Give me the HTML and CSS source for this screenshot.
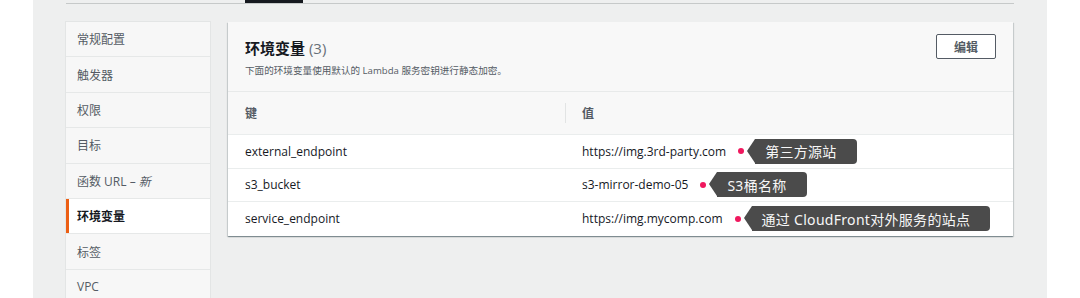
FILE: index.html
```html
<!DOCTYPE html>
<html lang="zh-CN">
<head>
    <meta charset="UTF-8">
    <title>环境变量</title>
    <link rel="stylesheet" href="styles.css">
</head>
<body>
    <div class="page">
        <div class="tabs">
            <div class="tab-active"></div>
        </div>
        <div class="layout">
            <div class="side-nav">
                <a href="#" class="nav-item">常规配置</a>
                <a href="#" class="nav-item">触发器</a>
                <a href="#" class="nav-item">权限</a>
                <a href="#" class="nav-item">目标</a>
                <a href="#" class="nav-item">函数 URL – <i>新</i></a>
                <a href="#" class="nav-item active">环境变量</a>
                <a href="#" class="nav-item">标签</a>
                <a href="#" class="nav-item">VPC</a>
            </div>
            <div class="panel">
                <div class="panel-header">
                    <div class="panel-title">
                        <h2>环境变量 <span class="count">(3)</span></h2>
                        <p>下面的环境变量使用默认的 Lambda 服务密钥进行静态加密。</p>
                    </div>
                    <button class="edit-button">编辑</button>
                </div>
                <div class="table">
                    <div class="row head">
                        <div class="cell">键</div>
                        <div class="cell divided">值</div>
                    </div>
                    <div class="row">
                        <div class="cell">external_endpoint</div>
                        <div class="cell">https://img.3rd-party.com<span class="dot"></span><span class="note">第三方源站</span></div>
                    </div>
                    <div class="row">
                        <div class="cell">s3_bucket</div>
                        <div class="cell">s3-mirror-demo-05<span class="dot"></span><span class="note">S3桶名称</span></div>
                    </div>
                    <div class="row">
                        <div class="cell">service_endpoint</div>
                        <div class="cell">https://img.mycomp.com<span class="dot"></span><span class="note">通过 CloudFront对外服务的站点</span></div>
                    </div>
                </div>
            </div>
        </div>
    </div>
</body>
</html>
```

FILE: styles.css
```css
body {
    margin: 0;
    background-color: #fff;
    font-family: 'Open Sans', 'Noto Sans CJK SC', sans-serif;
    color: #16191f;
}

.page {
    margin-left: 33px;
    width: 948px;
    height: 298px;
    padding: 0 33px;
    background-color: #eeefef;
    overflow: hidden;
}

.tabs {
    height: 3px;
    border-bottom: 1px solid #c6c9c9;
}

.tab-active {
    margin-left: 179px;
    width: 58px;
    height: 3px;
    background-color: #16191f;
}

.layout {
    display: grid;
    grid-template-columns: 144px 785px;
    gap: 18px;
    margin-top: 18px;
    align-items: start;
}

/* left navigation */
.side-nav {
    display: flex;
    flex-direction: column;
    background-color: #f7f7f7;
    box-shadow: 0 0 0 1px #e3e5e5;
}

.nav-item {
    display: flex;
    align-items: center;
    box-sizing: border-box;
    height: 35.4px;
    padding-left: 11px;
    border-bottom: 1px solid #e6e8e8;
    font-size: 12px;
    color: #545b64;
    text-decoration: none;
}

.nav-item i {
    margin-left: 3px;
}

.nav-item.active {
    background-color: #fff;
    color: #16191f;
    font-weight: 700;
    box-shadow: inset 3px 0 0 #ec5f14;
}

/* panel */
.panel {
    background-color: #fff;
    box-shadow: 0 1px 1px 0 rgba(0, 28, 36, 0.3), 1px 1px 1px 0 rgba(0, 28, 36, 0.12), -1px 1px 1px 0 rgba(0, 28, 36, 0.12);
}

.panel-header {
    display: flex;
    justify-content: space-between;
    align-items: flex-start;
    box-sizing: border-box;
    height: 70px;
    padding: 12px 17px 0 17px;
    background-color: #f8f8f8;
    border-bottom: 1px solid #e8eaea;
}

.panel-title h2 {
    margin: 4px 0 0 0;
    font-size: 15px;
    font-weight: 700;
    line-height: 20px;
}

.panel-title .count {
    font-weight: 400;
    color: #687078;
}

.panel-title p {
    margin: 6px 0 0 0;
    font-size: 9.6px;
    line-height: 14px;
    color: #545b64;
}

.edit-button {
    width: 60px;
    height: 25px;
    background-color: #fff;
    border: 1px solid #545b64;
    border-radius: 2px;
    font-family: inherit;
    font-size: 12px;
    font-weight: 700;
    color: #545b64;
}

/* table */
.row {
    display: grid;
    grid-template-columns: 337px 1fr;
    box-sizing: border-box;
    height: 33.5px;
    border-bottom: 1px solid #eaeded;
}

.row:last-child {
    border-bottom: none;
}

.row.head {
    height: 43px;
    background-color: #f8f8f8;
}

.cell {
    display: flex;
    align-items: center;
    padding-left: 17px;
    font-size: 12px;
}

.row .cell + .cell {
    padding-left: 17px;
}

.head .cell {
    font-weight: 700;
    color: #545b64;
}

.head .divided {
    background: linear-gradient(#e2e4e4, #e2e4e4) no-repeat 0 center / 1px 20px;
}

.dot {
    width: 6px;
    height: 6px;
    margin-left: 12px;
    border-radius: 50%;
    background-color: #f0185e;
}

.note {
    position: relative;
    display: flex;
    align-items: center;
    height: 25px;
    margin-left: 11px;
    padding: 0 20px 0 10px;
    border-radius: 0 4px 4px 0;
    background-color: #4b4b4b;
    color: #f7f7f7;
    font-family: 'Noto Sans', 'Noto Sans CJK SC', sans-serif;
    font-size: 14px;
    letter-spacing: 0.3px;
}

.note::before {
    content: '';
    position: absolute;
    left: -8px;
    top: 0;
    border-top: 12.5px solid transparent;
    border-bottom: 12.5px solid transparent;
    border-right: 8px solid #4b4b4b;
}
```
